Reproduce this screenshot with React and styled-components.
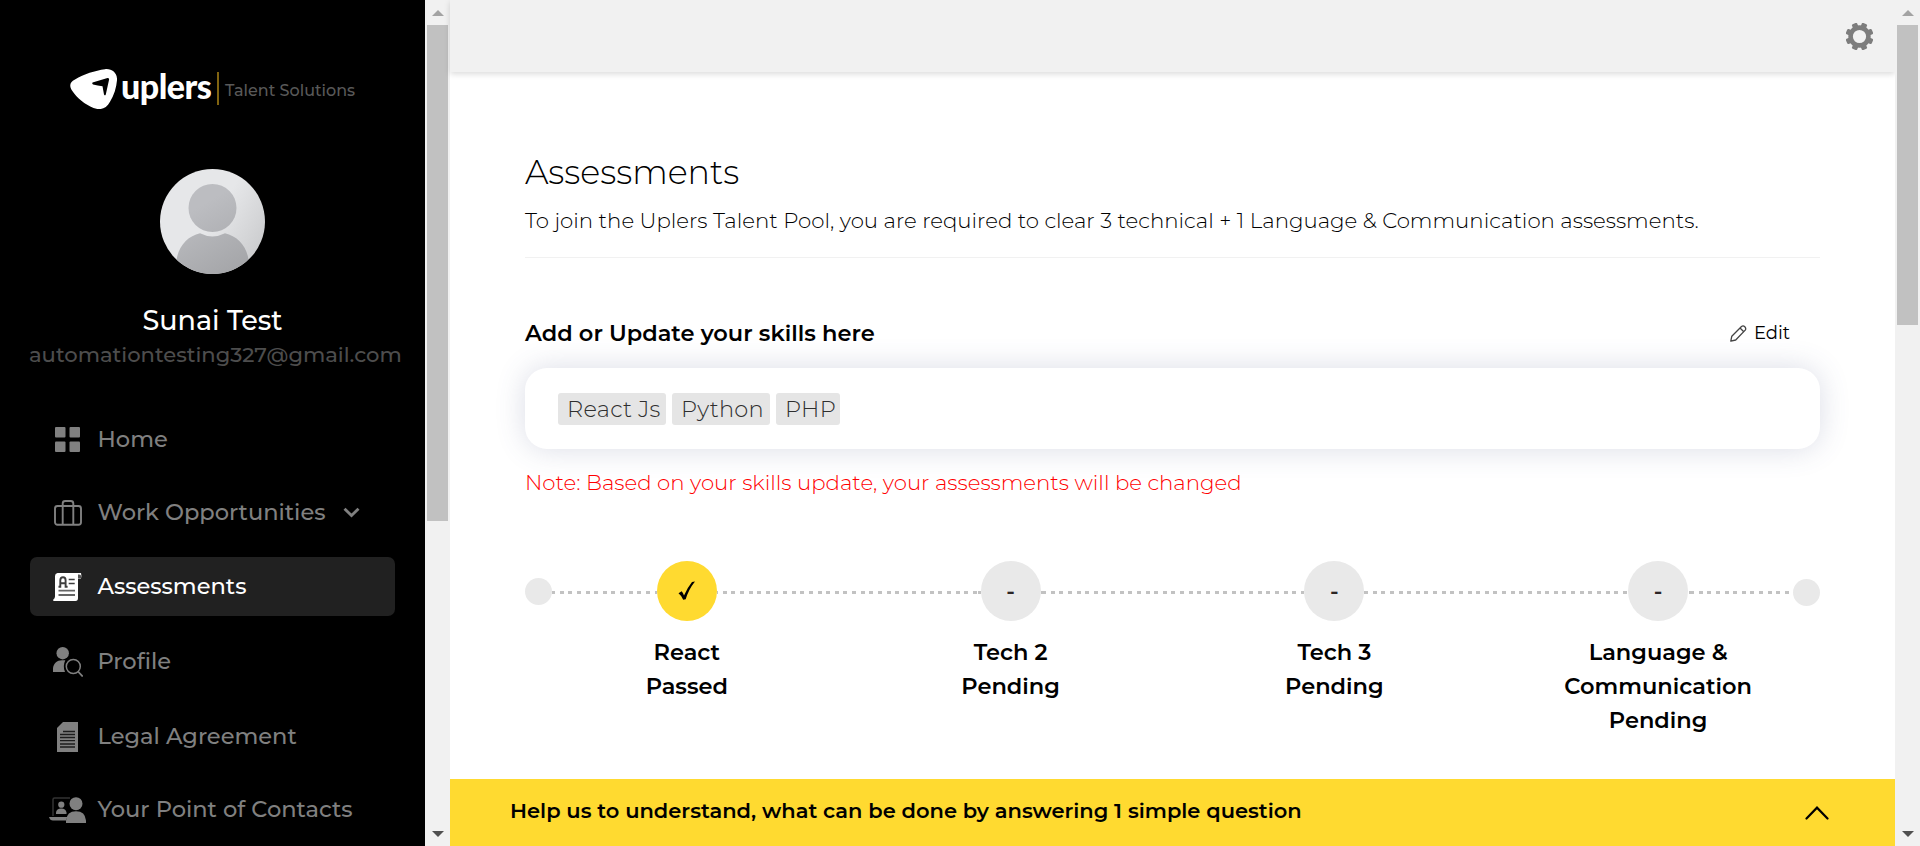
import React from 'react';
import styled, { createGlobalStyle } from 'styled-components';

const GlobalStyle = createGlobalStyle`
  * { box-sizing: border-box; }
  html, body { margin: 0; padding: 0; background: #fff; overflow: hidden; }
  body { font-family: Montserrat, Inter, "Liberation Sans", sans-serif; color: #000; }
  h1, h2, p { margin: 0; }
  svg { display: block; }
`;

const Page = styled.div`
  display: flex;
  width: 100%;
  height: 846px;
`;

/* ---------- scrollbars ---------- */

const ScrollTrack = styled.div`
  flex: none;
  display: flex;
  flex-direction: column;
  align-items: center;
  width: 25px;
  height: 100%;
  background: #f1f1f1;
`;

const ScrollThumb = styled.div`
  width: 21px;
  height: ${(p) => p.$length}px;
  background: #c1c1c1;
`;

const ScrollArrow = styled.div`
  display: flex;
  align-items: center;
  justify-content: center;
  width: 25px;
  height: 25px;
  margin-top: ${(p) => (p.$end ? 'auto' : 0)};
`;

function Scrollbar({ length }) {
  return (
    <ScrollTrack>
      <ScrollArrow>
        <svg width="12" height="6" viewBox="0 0 12 6"><path d="M0 6L6 0l6 6z" fill="#a3a3a3" /></svg>
      </ScrollArrow>
      <ScrollThumb $length={length} />
      <ScrollArrow $end>
        <svg width="12" height="6" viewBox="0 0 12 6"><path d="M0 0l6 6 6-6z" fill="#505050" /></svg>
      </ScrollArrow>
    </ScrollTrack>
  );
}

/* ---------- sidebar ---------- */

const Sidebar = styled.aside`
  flex: none;
  width: 425px;
  height: 100%;
  padding-top: 69px;
  overflow: hidden;
  background: #000;
`;

const Logo = styled.div`
  display: flex;
  align-items: flex-start;
  height: 40px;
  padding-left: 70px;
`;

const Wordmark = styled.div`
  width: 95px;
  margin-left: 4px;
  color: #fff;
  font-family: Lato, sans-serif;
  font-size: 34px;
  font-weight: 900;
  line-height: 34px;
  letter-spacing: -0.5px;
`;

const LogoDivider = styled.div`
  width: 2px;
  height: 33px;
  margin: 3px 0 0 1px;
  background: #806310;
`;

const Tagline = styled.div`
  margin-left: 6px;
  color: #595959;
  font-size: 16px;
  font-weight: 500;
  line-height: 43px;
  white-space: nowrap;
`;

const Avatar = styled.div`
  width: 105px;
  height: 105px;
  margin: 60px auto 0;
  border-radius: 50%;
  overflow: hidden;
`;

const UserName = styled.div`
  margin-top: 27px;
  color: #fff;
  font-size: 27px;
  font-weight: 500;
  line-height: 40px;
  text-align: center;
`;

const UserEmail = styled.div`
  padding-left: 29px;
  color: #4d4d4d;
  font-size: 21.1px;
  font-weight: 500;
  line-height: 28px;
  white-space: nowrap;
`;

const Menu = styled.nav`
  padding: 41px 30px 0;
`;

const MenuItem = styled.a`
  display: flex;
  align-items: center;
  height: 59px;
  margin-bottom: ${(p) => p.$gap}px;
  padding-left: 18px;
  border-radius: 7px;
  background: ${(p) => (p.$active ? '#212121' : 'transparent')};
  color: ${(p) => (p.$active ? '#fff' : '#808080')};
`;

const IconSlot = styled.span`
  display: flex;
  justify-content: center;
  width: 39px;
`;

const MenuLabel = styled.span`
  margin-left: 10.5px;
  padding-bottom: 2px;
  font-size: 22.55px;
  font-weight: 500;
  white-space: nowrap;
`;

const MenuCaret = styled.span`
  margin-left: 18px;
`;

const HomeIcon = () => (
  <svg width="25" height="25" viewBox="0 0 25 25" fill="#808080">
    <rect width="10.5" height="10.5" rx="1" /><rect x="14.5" width="10.5" height="10.5" rx="1" />
    <rect y="14.5" width="10.5" height="10.5" rx="1" /><rect x="14.5" y="14.5" width="10.5" height="10.5" rx="1" />
  </svg>
);
const CaseIcon = () => (
  <svg width="28" height="26" viewBox="0 0 28 26" fill="none" stroke="#808080" strokeWidth="1.9">
    <rect x="1" y="6" width="26" height="18.7" rx="2.5" />
    <path d="M8.7 24.5V3.5c0-1.6 1-2.5 2.5-2.5h5.6c1.5 0 2.5.9 2.5 2.5v21" />
  </svg>
);
const AssessIcon = () => (
  <svg width="29" height="28" viewBox="0 0 29 28">
    <path d="M4.5 0H28q.8 2.8 0 5.5h-3V25q0 3-2.5 3H.3v-1.5q1.7-.8 1.7-3V3Q2 .3 4.5 0z" fill="#fff" />
    <path d="M25 1.5V5h3V2.5q-1-1.500-3-1z" fill="#555" />
    <g fill="none" stroke="#3d3d3d" strokeWidth="1.5">
      <path d="M5.5 13.700h1.800V7.200Q7.400 4.300 10 4.300t2.600 2.900v6.500h2M7.500 10.200h5" strokeWidth="1.9" />
      <path d="M15.700 6.500h6M15.700 10.600h6" />
      <path d="M5.500 17.700h16.500M5.500 22h16.500" strokeWidth="1.8" stroke="#666" />
    </g>
  </svg>
);
const ProfileIcon = () => (
  <svg width="30" height="30" viewBox="0 0 30 30">
    <circle cx="9.7" cy="6.2" r="6.2" fill="#808080" />
    <path d="M0 25v-3.500C.3 16.500 4 13.200 9 13.200h3.300Q9.500 19 12 25z" fill="#808080" />
    <circle cx="20.3" cy="19.5" r="7" fill="none" stroke="#808080" strokeWidth="1.5" />
    <path d="M25 24.500l4.700 5" stroke="#808080" strokeWidth="1.8" />
  </svg>
);
const LegalIcon = () => (
  <svg width="21" height="30" viewBox="0 0 21 30">
    <path d="M6 0h15v30H0V6z" fill="#808080" />
    <path d="M6 9.500h12M3 12.500h15M3 15.500h15M3 18.700h15M3 22h15M3 25h15" stroke="#1c1c1c" strokeWidth="1.3" />
  </svg>
);
const ContactsIcon = () => (
  <svg width="37" height="26" viewBox="0 0 37 26">
    <path d="M4 19V2.500Q4 1 5.500 1H21" fill="none" stroke="#333" strokeWidth="1.5" />
    <g fill="#808080">
      <path d="M0 20h18.500q-1 1.500-1.300 3.500H4Q1 23.500 0 20z" />
      <circle cx="12.3" cy="7.7" r="3.1" />
      <path d="M7 17v-1.500q.6-4 5.200-4t5.300 4V17z" />
      <circle cx="27" cy="6.7" r="6.5" />
      <path d="M17 26v-2.500q.8-9.300 10-9.300T37 23.500V26z" />
    </g>
  </svg>
);
const CaretIcon = () => (
  <svg width="17" height="11" viewBox="0 0 17 11" fill="none" stroke="#808080" strokeWidth="2.8">
    <path d="M1.5 1.700l7 6.800 7-6.800" />
  </svg>
);

const menu = [
  { label: 'Home', Icon: HomeIcon, gap: 14 },
  { label: 'Work Opportunities', Icon: CaseIcon, gap: 15, caret: true },
  { label: 'Assessments', Icon: AssessIcon, gap: 16, active: true },
  { label: 'Profile', Icon: ProfileIcon, gap: 16 },
  { label: 'Legal Agreement', Icon: LegalIcon, gap: 14 },
  { label: 'Your Point of Contacts', Icon: ContactsIcon, gap: 0 },
];

/* ---------- main column ---------- */

const Main = styled.main`
  flex: 1;
  display: flex;
  flex-direction: column;
  min-width: 0;
  height: 100%;
`;

const TopBar = styled.header`
  flex: none;
  display: flex;
  align-items: flex-start;
  justify-content: flex-end;
  height: 72px;
  padding: 23px 22px 0 0;
  background: #f1f1f1;
  box-shadow: 0 2px 6px rgba(0, 0, 0, 0.15);
`;

const Content = styled.section`
  flex: 1;
  min-height: 0;
  padding: 80px 75px 0;
`;

const Title = styled.h1`
  font-size: 33.4px;
  font-weight: 300;
  line-height: 41px;
`;

const Intro = styled.p`
  margin-top: 9px;
  padding-bottom: 19px;
  border-bottom: 1px solid #f1f1f1;
  font-size: 21.27px;
  font-weight: 300;
  line-height: 36px;
  white-space: nowrap;
`;

const SectionHead = styled.div`
  display: flex;
  justify-content: space-between;
  margin-top: 57px;
  padding-right: 30px;
  line-height: 36px;
`;

const SectionTitle = styled.h2`
  font-size: 22.5px;
  font-weight: 600;
`;

const EditButton = styled.a`
  display: flex;
  align-items: center;
  gap: 7px;
  font-size: 18px;
`;

const SkillCard = styled.div`
  display: flex;
  gap: 6px;
  height: 81px;
  margin-top: 17px;
  padding: 25px 33px;
  border-radius: 22px;
  background: #fff;
  box-shadow: 0 0 30px rgba(70, 80, 130, 0.2);
`;

const SkillChip = styled.span`
  width: ${(p) => p.$width}px;
  height: 32px;
  padding-left: 9px;
  border-radius: 3px;
  background: #e5e5e5;
  color: #2f2f2f;
  font-size: 22.5px;
  font-weight: 300;
  line-height: 33px;
  letter-spacing: 0.25px;
  white-space: nowrap;
`;

const Note = styled.p`
  margin-top: 15px;
  color: #f00;
  font-size: 21.27px;
  font-weight: 300;
  line-height: 36px;
`;

const Rail = styled.div`
  display: flex;
  align-items: center;
  height: 60px;
  margin-top: 61px;
`;

const EndDot = styled.span`
  flex: none;
  width: 27px;
  height: 27px;
  margin-top: ${(p) => p.$drop}px;
  border-radius: 50%;
  background: #e9e9e9;
`;

const Dots = styled.span`
  flex: ${(p) => (p.$edge ? '0 0 105px' : '1')};
  height: 3px;
  margin-top: 3px;
  background: repeating-linear-gradient(90deg, #c2c2c2 0 4px, transparent 4px 8.63px);
  background-position-x: ${(p) => p.$phase || 0}px;
`;

const StepCircle = styled.span`
  flex: none;
  display: flex;
  align-items: center;
  justify-content: center;
  width: 60px;
  height: 60px;
  border-radius: 50%;
  background: ${(p) => (p.$done ? '#ffda30' : '#e9e9e9')};
  color: #2b2525;
  font-size: 22.5px;
  font-weight: 600;
`;

const StepLabels = styled.div`
  display: grid;
  grid-template-columns: repeat(4, 1fr);
  margin-top: 14px;
`;

const StepLabel = styled.div`
  display: flex;
  flex-direction: column;
  align-items: center;
`;

const StepLine = styled.span`
  font-size: 22.5px;
  font-weight: 600;
  line-height: 34px;
`;

const FeedbackBar = styled.footer`
  flex: none;
  display: flex;
  justify-content: space-between;
  height: 67px;
  padding: 0 66px 0 60px;
  background: #ffda30;
`;

const FeedbackText = styled.p`
  font-size: 21px;
  font-weight: 600;
  line-height: 64px;
`;

const FeedbackToggle = styled.span`
  margin-top: 27px;
`;

const skills = [
  { name: 'React Js', width: 108 },
  { name: 'Python', width: 98 },
  { name: 'PHP', width: 64 },
];

const steps = [
  ['React', 'Passed'],
  ['Tech 2', 'Pending'],
  ['Tech 3', 'Pending'],
  ['Language &', 'Communication', 'Pending'],
];

const teeth = [22.5, 67.5, 112.5, 157.5, 202.5, 247.5, 292.5, 337.5];

export default function App() {
  return (
    <Page>
      <GlobalStyle />
      <Sidebar>
        <Logo>
          <svg width="47" height="40" viewBox="0 0 47 40">
            <path d="M5 10.500C14 5 25 1.500 35 .2c7-.8 12.500 4 12 11-.6 7.500-3 15-7 21.500C36 40 30 41.500 23.500 39 15 35.500 7 29 2 21.500-.8 17-.5 13 5 10.500z" fill="#fff" />
            <path d="M22.500 13.500L37.500 9q1.800-.3 1.600 1.500L35.800 25.500q-.8 1.700-1.800 0L32.500 17.200q-4.800-.6-9.500-1.700-1.400-1-.5-2z" fill="#000" />
          </svg>
          <Wordmark>uplers</Wordmark>
          <LogoDivider />
          <Tagline>Talent Solutions</Tagline>
        </Logo>
        <Avatar>
          <svg width="105" height="105" viewBox="0 0 105 105">
            <defs>
              <linearGradient id="backdrop" x1="0" y1="0.2" x2="1" y2="0.8">
                <stop offset="0.5" stopColor="#e6e7e9" /><stop offset="1" stopColor="#c9cacc" />
              </linearGradient>
              <linearGradient id="figure" gradientUnits="userSpaceOnUse" x1="30" y1="20" x2="80" y2="105">
                <stop offset="0.2" stopColor="#bcbdc1" /><stop offset="1" stopColor="#a3a4a7" />
              </linearGradient>
            </defs>
            <rect width="105" height="105" fill="url(#backdrop)" />
            <circle cx="52.5" cy="39" r="24" fill="url(#figure)" />
            <path d="M16.500 105V91C18.500 77 28 67 40 64.300q12.500 6.400 25 0C77 67 87 77 88.500 91v14z" fill="url(#figure)" />
          </svg>
        </Avatar>
        <UserName>Sunai Test</UserName>
        <UserEmail>automationtesting327@gmail.com</UserEmail>
        <Menu>
          {menu.map(({ label, Icon, gap, active, caret }) => (
            <MenuItem key={label} $active={active} $gap={gap}>
              <IconSlot><Icon /></IconSlot>
              <MenuLabel>{label}</MenuLabel>
              {caret && <MenuCaret><CaretIcon /></MenuCaret>}
            </MenuItem>
          ))}
        </Menu>
      </Sidebar>
      <Scrollbar length={496} />
      <Main>
        <TopBar>
          <svg width="27" height="27" viewBox="-13.5 -13.5 27 27">
            {teeth.map((a) => (
              <rect key={a} x="-2.8" y="-14" width="5.6" height="7" rx="1.2" fill="#7d7d7d" transform={`rotate(${a})`} />
            ))}
            <circle r="8.9" fill="none" stroke="#7d7d7d" strokeWidth="4.6" />
          </svg>
        </TopBar>
        <Content>
          <Title>Assessments</Title>
          <Intro>To join the Uplers Talent Pool, you are required to clear 3 technical + 1 Language &amp; Communication assessments.</Intro>
          <SectionHead>
            <SectionTitle>Add or Update your skills here</SectionTitle>
            <EditButton>
              <svg width="17" height="17" viewBox="0 0 17 17" fill="none" stroke="#444" strokeWidth="1.3" strokeLinejoin="round">
                <path d="M.8 16.200l1-5L11.500 1.500q1.700-1.300 3.300.3t.4 3.300L5.700 15z" />
                <path d="M10 3l3.800 3.800" />
              </svg>
              Edit
            </EditButton>
          </SectionHead>
          <SkillCard>
            {skills.map((s) => (
              <SkillChip key={s.name} $width={s.width}>{s.name}</SkillChip>
            ))}
          </SkillCard>
          <Note>Note: Based on your skills update, your assessments will be changed</Note>
          <Rail>
            <EndDot $drop={0} />
            <Dots $edge $phase={-1} />
            <StepCircle $done>
              <svg width="18" height="20" viewBox="0 0 18 20">
                <path d="M.5 12.200l3.200-1.900q1.500 1.700 2.300 4.200Q9.500 6.500 14 1l3-.6Q10.500 8.500 7.700 18.200l-2.500.6Q3.300 14.300.5 12.200z" fill="#000" />
              </svg>
            </StepCircle>
            <Dots $phase={-3} />
            <StepCircle>-</StepCircle>
            <Dots $phase={1} />
            <StepCircle>-</StepCircle>
            <Dots />
            <StepCircle>-</StepCircle>
            <Dots $edge $phase={2} />
            <EndDot $drop={3} />
          </Rail>
          <StepLabels>
            {steps.map((lines, i) => (
              <StepLabel key={i}>
                {lines.map((text) => (
                  <StepLine key={text}>{text}</StepLine>
                ))}
              </StepLabel>
            ))}
          </StepLabels>
        </Content>
        <FeedbackBar>
          <FeedbackText>Help us to understand, what can be done by answering 1 simple question</FeedbackText>
          <FeedbackToggle>
            <svg width="24" height="14" viewBox="0 0 24 14" fill="none" stroke="#000" strokeWidth="2.2" strokeLinecap="round">
              <path d="M1.500 12.500L12 1.700l10.500 10.800" />
            </svg>
          </FeedbackToggle>
        </FeedbackBar>
      </Main>
      <Scrollbar length={300} />
    </Page>
  );
}
